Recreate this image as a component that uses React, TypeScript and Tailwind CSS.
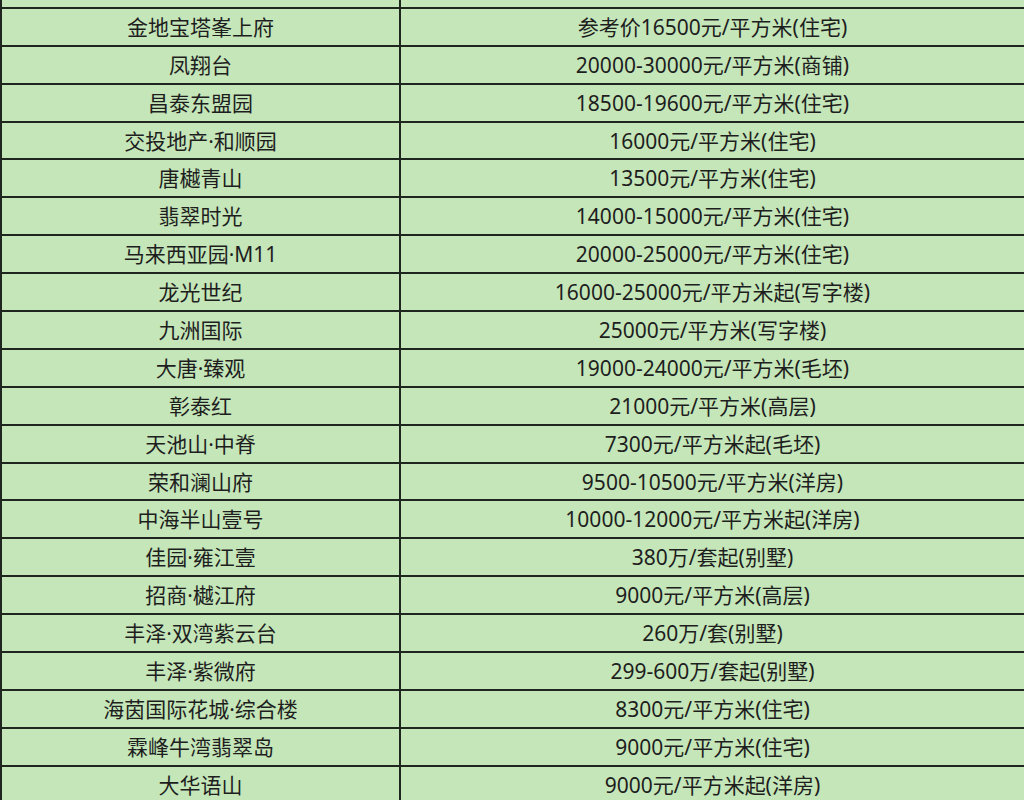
import React from 'react';

const rows: [string, string][] = [
  ['', '参考价15500元/平方米(住宅)'],
  ['金地宝塔峯上府', '参考价16500元/平方米(住宅)'],
  ['凤翔台', '20000-30000元/平方米(商铺)'],
  ['昌泰东盟园', '18500-19600元/平方米(住宅)'],
  ['交投地产·和顺园', '16000元/平方米(住宅)'],
  ['唐樾青山', '13500元/平方米(住宅)'],
  ['翡翠时光', '14000-15000元/平方米(住宅)'],
  ['马来西亚园·M11', '20000-25000元/平方米(住宅)'],
  ['龙光世纪', '16000-25000元/平方米起(写字楼)'],
  ['九洲国际', '25000元/平方米(写字楼)'],
  ['大唐·臻观', '19000-24000元/平方米(毛坯)'],
  ['彰泰红', '21000元/平方米(高层)'],
  ['天池山·中脊', '7300元/平方米起(毛坯)'],
  ['荣和澜山府', '9500-10500元/平方米(洋房)'],
  ['中海半山壹号', '10000-12000元/平方米起(洋房)'],
  ['佳园·雍江壹', '380万/套起(别墅)'],
  ['招商·樾江府', '9000元/平方米(高层)'],
  ['丰泽·双湾紫云台', '260万/套(别墅)'],
  ['丰泽·紫微府', '299-600万/套起(别墅)'],
  ['海茵国际花城·综合楼', '8300元/平方米(住宅)'],
  ['霖峰牛湾翡翠岛', '9000元/平方米(住宅)'],
  ['大华语山', '9000元/平方米起(洋房)'],
];

export default function App() {
  return (
    <div className="h-[800px] w-[1024px] overflow-hidden bg-[#c5e6b9]">
      {/* 价格表，首行只露出底边 */}
      <div
        className="-mt-[29px] border-l-2 border-[#1f261f] text-[21px] text-[#1e1e1e]"
        style={{ fontFamily: '"Noto Sans", "Noto Sans CJK SC", sans-serif' }}
      >
        {rows.map(([name, price], i) => (
          <div key={i} className="flex h-[37.9px] border-b-2 border-[#1f261f] leading-none">
            <div className="flex w-[399px] shrink-0 items-center justify-center border-r-2 border-[#1f261f] pt-px">
              {name}
            </div>
            <div className="flex flex-1 items-center justify-center pt-px">{price}</div>
          </div>
        ))}
      </div>
    </div>
  );
}
